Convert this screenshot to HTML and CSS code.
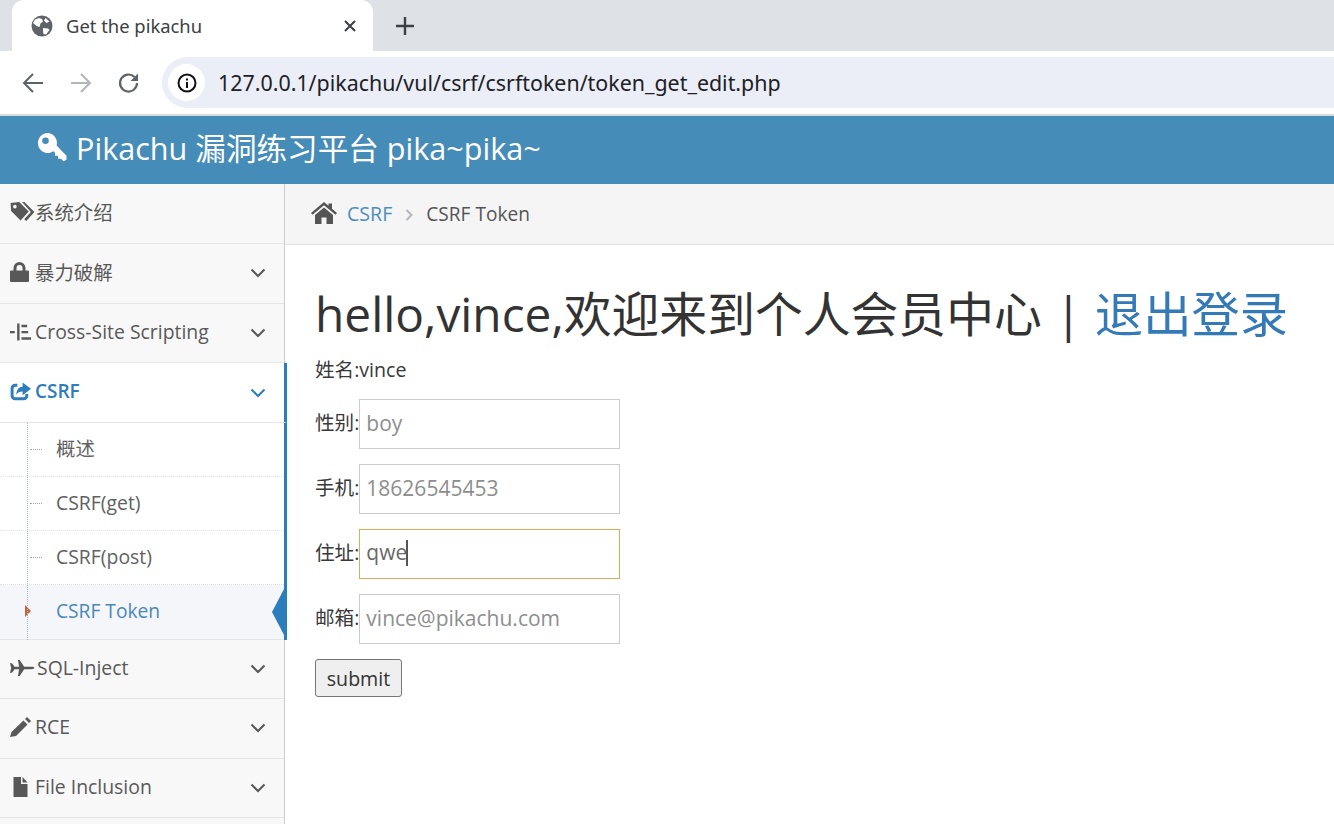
FILE: index.html
```html
<!DOCTYPE html>
<html lang="en">
<head>
  <meta charset="UTF-8" />
  <title>Get the pikachu</title>
  <link rel="stylesheet" href="styles.css">
</head>
<body>
  <div class="tabbar">
    <div class="tab">
      <svg class="tab-globe" viewBox="0 0 22 22"><circle cx="11" cy="11" r="10.5" fill="#5f6368"/><path d="M4 4.500l4-1.500 3 1 1 2.500-2.500 2-1 3.500-3-1-3.500-3zM12 13l5 .5 1.500 1.500-3.500 4.500-2.500-.5-.5-3zM14.500 3l4 3.500-3 1.500-2.500-2.500z" fill="#fff"/></svg>
      <span class="tab-title">Get the pikachu</span>
      <svg class="tab-close" viewBox="0 0 12 12"><path d="M1 1l10 10M11 1L1 11" stroke="#3c4043" stroke-width="2"/></svg>
    </div>
    <svg class="tab-new" viewBox="0 0 18 18"><path d="M9 0v18M0 9h18" stroke="#3c4043" stroke-width="2.400"/></svg>
  </div>

  <div class="toolbar">
    <svg class="tool" viewBox="0 0 24 24"><path d="M22 12H4M12 3l-9 9 9 9" fill="none" stroke="#5f6368" stroke-width="2"/></svg>
    <svg class="tool" viewBox="0 0 24 24"><path d="M2 12h18M12 3l9 9-9 9" fill="none" stroke="#b4b6b9" stroke-width="2"/></svg>
    <svg class="tool" viewBox="0 0 24 24"><path d="M20 12a8.500 8.500 0 1 1-2.500-6" fill="none" stroke="#5f6368" stroke-width="2.200"/><path d="M21 2.500v7.500h-7.500z" fill="#5f6368"/></svg>
    <div class="omnibox">
      <span class="site-info">
        <svg viewBox="0 0 20 20"><circle cx="10" cy="10" r="8.500" fill="none" stroke="#111" stroke-width="2"/><path d="M9 9h2v6H9zM9 5.500h2v2H9z" fill="#111"/></svg>
      </span>
      <span class="url">127.0.0.1/pikachu/vul/csrf/csrftoken/token_get_edit.php</span>
    </div>
  </div>

  <header class="navbar">
    <svg class="brand-key" viewBox="0 0 30 30"><path d="M11 1a10 10 0 1 0 5.500 18.300l1.500 1.500v3h3v3h3l2.500 2.500 3-1.500v-4L19.600 13.500A10 10 0 0 0 11 1zM8.500 5.500a3.300 3.300 0 1 1 0 6.600 3.300 3.300 0 0 1 0-6.600z" fill="#fff" fill-rule="evenodd"/></svg>
    <span class="brand-text">Pikachu 漏洞练习平台 pika~pika~</span>
  </header>

  <div class="layout">
    <nav class="sidebar">
      <a class="nav-item">
        <svg class="nav-icon tag" viewBox="0 0 25 21"><path d="M0 1l9-1 10 10-8.500 9.500L.5 9.500zM4.500 3a1.900 1.900 0 1 0 .01 0zM12 0h2.500L25 10.500 16.500 20l-2.200-1.800 7-7.700z" fill="#585858" fill-rule="evenodd"/></svg>
        <span class="nav-label raised">系统介绍</span>
      </a>
      <a class="nav-item">
        <svg class="nav-icon" viewBox="0 0 19 20" preserveAspectRatio="xMinYMid"><path d="M1 8.500h2.500V6a6 6 0 0 1 12 0v2.500H18a1 1 0 0 1 1 1V19a1 1 0 0 1-1 1H1a1 1 0 0 1-1-1V9.500a1 1 0 0 1 1-1zM6.500 8.500h6V6a3 3 0 0 0-6 0z" fill="#585858" fill-rule="evenodd"/></svg>
        <span class="nav-label raised">暴力破解</span>
        <svg class="chevron" viewBox="0 0 16 10"><path d="M1.500 1.500L8 8l6.500-6.500" fill="none" stroke="#585858" stroke-width="2"/></svg>
      </a>
      <a class="nav-item">
        <svg class="nav-icon" viewBox="0 0 22 18" preserveAspectRatio="xMinYMid"><path d="M7.500 0h2.500v18H7.500zM12 1.500h6v2.400h-6zM12 8h7v2.400h-7zM12 14.500h10V17H12zM0 8h5v2.400H0z" fill="#585858"/></svg>
        <span class="nav-label">Cross-Site Scripting</span>
        <svg class="chevron" viewBox="0 0 16 10"><path d="M1.500 1.500L8 8l6.500-6.500" fill="none" stroke="#585858" stroke-width="2"/></svg>
      </a>
      <a class="nav-item active">
        <svg class="nav-icon" viewBox="0 0 20 18" preserveAspectRatio="xMinYMid"><path d="M7 2.500H5a3 3 0 0 0-3 3v7a3 3 0 0 0 3 3h8a3 3 0 0 0 3-3V11" fill="none" stroke="#2b7dbc" stroke-width="2.800"/><path d="M12 0l8 6-8 6V8.500c-3 0-5 1-6 3 0-4.500 2.500-7.500 6-7.500z" fill="#2b7dbc"/></svg>
        <span class="nav-label raised">CSRF</span>
        <svg class="chevron" viewBox="0 0 16 10"><path d="M1.500 1.500L8 8l6.500-6.500" fill="none" stroke="#2b7dbc" stroke-width="2"/></svg>
      </a>
      <ul class="submenu">
        <li class="sub-item"><span class="raised">概述</span></li>
        <li class="sub-item">CSRF(get)</li>
        <li class="sub-item">CSRF(post)</li>
        <li class="sub-item current">CSRF Token</li>
      </ul>
      <a class="nav-item">
        <svg class="nav-icon plane" viewBox="0 0 22 14" preserveAspectRatio="xMinYMid"><path d="M0 2.500l2 .5 2 3h4L7 0h1.500l4 6h6c4 0 4 2 0 2h-6l-4 6H7l1-6H4l-2 3-2 .5 1-4.500z" fill="#585858"/></svg>
        <span class="nav-label raised">SQL-Inject</span>
        <svg class="chevron" viewBox="0 0 16 10"><path d="M1.500 1.500L8 8l6.500-6.500" fill="none" stroke="#585858" stroke-width="2"/></svg>
      </a>
      <a class="nav-item">
        <svg class="nav-icon" viewBox="0 0 21 20" preserveAspectRatio="xMinYMid"><path d="M13.500 3.500l4 4L6 19 0 20l1.500-5zM15 2l2-2 4 4-2 2z" fill="#585858"/></svg>
        <span class="nav-label raised">RCE</span>
        <svg class="chevron" viewBox="0 0 16 10"><path d="M1.500 1.500L8 8l6.500-6.500" fill="none" stroke="#585858" stroke-width="2"/></svg>
      </a>
      <a class="nav-item">
        <svg class="nav-icon" viewBox="0 0 18 20"><path d="M2 0h7.500v7H16v13H2zM11 0l5 5.500h-5z" fill="#585858"/></svg>
        <span class="nav-label">File Inclusion</span>
        <svg class="chevron" viewBox="0 0 16 10"><path d="M1.500 1.500L8 8l6.500-6.500" fill="none" stroke="#585858" stroke-width="2"/></svg>
      </a>
    </nav>

    <main class="main">
      <div class="breadcrumbs">
        <svg class="home-icon" viewBox="0 0 26 22"><path d="M13 0l4.500 3.800V1.500h3.500v5.300L26 11l-1.500 1.700L13 3.200 1.500 12.700 0 11z" fill="#555"/><path d="M13 5.500l9 7.500v9h-6.500v-6.500h-5V22H4v-9z" fill="#555"/></svg>
        <a class="crumb-link">CSRF</a>
        <svg class="crumb-sep" viewBox="0 0 8 12"><path d="M1.500 1l5 5-5 5" fill="none" stroke="#b2b6bf" stroke-width="2"/></svg>
        <span class="crumb-current">CSRF Token</span>
      </div>
      <div class="page-content">
        <h1 class="hello">hello,vince,欢迎来到个人会员中心 | <a class="logout">退出登录</a></h1>
        <p class="name-row">姓名:vince</p>
        <form class="edit-form">
          <label class="field">性别:<input class="field-input" type="text" placeholder="boy"></label>
          <label class="field">手机:<input class="field-input" type="text" placeholder="18626545453"></label>
          <label class="field">住址:<span class="field-input focused">qwe<i class="caret"></i></span></label>
          <label class="field">邮箱:<input class="field-input" type="text" placeholder="vince@pikachu.com"></label>
          <button class="submit-btn" type="button">submit</button>
        </form>
      </div>
    </main>
  </div>
</body>
</html>
```

FILE: styles.css
```css
:root {
  --blue: #2b7dbc;
  --ink: #393939;
  --line: #e5e5e5;
}
* {
  box-sizing: border-box;
}
html, body {
  height: 824px;
  overflow: hidden;
}
body {
  margin: 0;
  background: #fff;
  color: var(--ink);
  font-family: "Open Sans", "Noto Sans CJK SC", sans-serif;
  font-size: 19.600px;
}

/* browser chrome */
.tabbar {
  height: 51px;
  background: #dee1e6;
  display: flex;
  align-items: center;
  padding-left: 12px;
}
.tab {
  width: 361px;
  height: 51px;
  background: #fff;
  border-radius: 12px 12px 0 0;
  display: flex;
  align-items: center;
  padding: 0 17px 0 19px;
}
.tab-globe {
  width: 22px;
  height: 22px;
  margin-right: 13px;
}
.tab-title {
  flex: 1;
  font-size: 18.400px;
  color: #3c4043;
  font-family: "Noto Sans", sans-serif;
}
.tab-close {
  width: 12px;
  height: 12px;
}
.tab-new {
  width: 18px;
  height: 18px;
  margin-left: 23px;
}
.toolbar {
  height: 63px;
  background: #fff;
  display: flex;
  align-items: center;
  padding-left: 21px;
}
.tool {
  width: 24px;
  height: 24px;
  margin-right: 24px;
}
.omnibox {
  flex: 1;
  height: 51px;
  margin-left: -3px;
  background: #ebeef7;
  border-radius: 26px 0 0 26px;
  display: flex;
  align-items: center;
  padding-left: 6px;
}
.site-info {
  width: 37px;
  height: 37px;
  border-radius: 50%;
  background: #fff;
  display: flex;
  align-items: center;
  justify-content: center;
  margin-right: 13px;
}
.site-info svg {
  width: 20px;
  height: 20px;
}
.url {
  font-size: 21.400px;
  color: #202124;
  font-family: "Noto Sans", sans-serif;
  margin-bottom: 1px;
}

.navbar {
  height: 70px;
  background: #468cb8;
  border-top: 2px solid #d8dbe0;
  color: #fff;
  display: flex;
  align-items: center;
  padding: 0 0 6px 37px;
  font-size: 30.600px;
}
.brand-key {
  width: 30px;
  height: 30px;
  margin-right: 9px;
}

.layout {
  display: flex;
  height: 640px;
}

/* sidebar */
.sidebar {
  width: 285px;
  flex: none;
  background: #f8f8f8;
  border-right: 1px solid #ccc;
  font-size: 19.400px;
}
.nav-item {
  height: 59.800px;
  display: flex;
  align-items: center;
  padding: 0 18px 2px 10px;
  color: #585858;
  border-bottom: 1px solid var(--line);
}
.submenu ~ .nav-item {
  height: 59.200px;
}
.nav-icon {
  width: 21px;
  height: 20px;
  margin-right: 4px;
  flex: none;
}
.nav-icon.tag {
  width: 25px;
  margin-right: 0;
}
.nav-icon.plane {
  width: 25px;
  margin-right: 2px;
}
.nav-label {
  flex: 1;
}
.raised {
  margin-bottom: 2px;
}
.chevron {
  width: 16px;
  height: 10px;
  flex: none;
  margin-top: 2px;
}
.nav-item.active {
  background: #fff;
  color: var(--blue);
  font-weight: 600;
  font-size: 19px;
  margin-right: -3px;
  border-right: 3px solid var(--blue);
}
.submenu {
  list-style: none;
  margin: 0 -3px 0 0;
  padding: 0;
  background: #fff;
  border-right: 3px solid var(--blue);
  position: relative;
}
.submenu::before {
  content: "";
  position: absolute;
  left: 27px;
  top: 0;
  bottom: 0;
  border-left: 1px dotted #9dbdd6;
  z-index: 1;
}
.sub-item {
  height: 54px;
  display: flex;
  align-items: center;
  padding: 0 0 3px 56px;
  color: #616161;
  border-bottom: 1px dotted #e4e4e4;
  position: relative;
}
.sub-item::before {
  content: "";
  position: absolute;
  left: 30px;
  top: 26px;
  width: 12px;
  border-top: 1px dotted #9ca3a8;
}
.sub-item.current {
  height: 55px;
  background: #f4f6fa;
  color: #4b88b8;
  font-size: 19.200px;
  border-bottom: 1px solid var(--line);
}
.sub-item.current::before {
  left: 25px;
  top: 20px;
  width: 0;
  border-top: 6px solid transparent;
  border-bottom: 6px solid transparent;
  border-left: 6px solid #c86139;
}
.sub-item.current::after {
  content: "";
  position: absolute;
  right: 0;
  top: 4px;
  border-top: 23px solid transparent;
  border-bottom: 23px solid transparent;
  border-right: 12px solid var(--blue);
}

/* main column */
.main {
  flex: 1;
}
.breadcrumbs {
  height: 61px;
  background: #f5f5f5;
  border-bottom: 1px solid var(--line);
  display: flex;
  align-items: center;
  padding-left: 26px;
}
.home-icon {
  width: 26px;
  height: 22px;
  margin-right: 10px;
  margin-bottom: 2px;
}
.crumb-link {
  color: #4c8fbd;
  margin-bottom: 1px;
}
.crumb-sep {
  width: 8px;
  height: 12px;
  margin: 2px 13px 0 13px;
}
.crumb-current {
  color: #555;
  font-size: 19.100px;
}
.page-content {
  padding: 0 30px;
}
.hello {
  font-size: 47.800px;
  font-weight: 400;
  word-spacing: 1px;
  line-height: 53px;
  margin: 42px 0 0;
  color: #333;
  white-space: nowrap;
}
.logout {
  color: #337ab7;
  font-size: 48.300px;
}
.name-row {
  height: 43px;
  line-height: 27px;
  margin: 16px 0 0;
}
.field {
  display: flex;
  align-items: flex-start;
  height: 50px;
  line-height: 47px;
  margin-bottom: 15px;
}
.field-input {
  width: 261px;
  height: 50px;
  border: 1px solid #ccc;
  padding: 0 6px 2px;
  font: inherit;
  font-size: 21px;
  color: #696969;
  outline: none;
  display: flex;
  align-items: center;
}
.field-input::placeholder {
  color: #8e8e8e;
}
.field-input.focused {
  border-color: #e2a95a;
  line-height: 1.4;
}
.caret {
  width: 2px;
  height: 26px;
  margin-left: -1px;
  background: #555;
}
.submit-btn {
  display: block;
  width: 87px;
  height: 38px;
  border: 1px solid #767676;
  border-radius: 3px;
  background: #efefef;
  font: inherit;
  color: #333;
  padding: 0;
}
```
